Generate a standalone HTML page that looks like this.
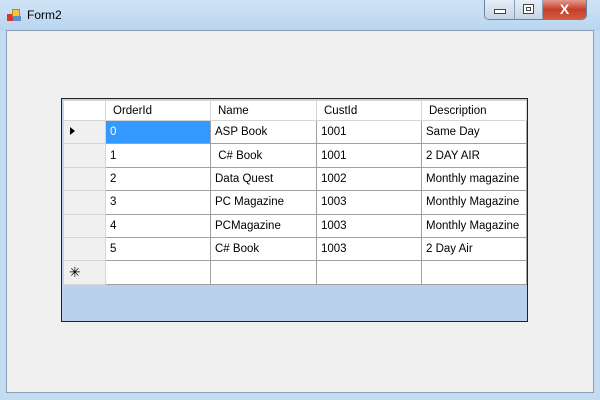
<!DOCTYPE html>
<html><head><style>
*{margin:0;padding:0;box-sizing:border-box}
body{width:600px;height:400px;overflow:hidden;background:#c4dcf2;font-family:"Liberation Sans",sans-serif;font-size:11.5px;color:#000;position:relative}
.title{position:absolute;left:0;top:0;width:600px;height:31px;background:linear-gradient(#cfe3f6,#b9d5ef)}
.client{position:absolute;left:6px;top:30px;width:588px;height:363px;background:#f0f0f0;border:1px solid #8a9fb5}
.btns{position:absolute;top:0;left:484px;height:20px;width:103px;border:1px solid #6e8298;border-top:none;border-radius:0 0 5px 5px;overflow:hidden;display:flex}
.grid{position:absolute;left:61px;top:98px;width:467px;height:224px;background:#b9d1ea;border:1px solid #222}
table{border-collapse:collapse;position:absolute;left:1px;top:1px}
td{height:23.4px;border:1px solid #a0a0a0;padding:0 0 0 4px;background:#fff;white-space:nowrap}
td.h{background:#f0f0f0;border-color:#d5d5d5;padding:0}
tr.hd td{height:20px;background:#fff;border-color:#d5d5d5;padding-left:7px}
</style></head><body>
<div class="title">
<div style="position:absolute;left:7px;top:9px;width:14px;height:12px">
<div style="position:absolute;left:0;top:5px;width:6px;height:7px;background:#d33"></div>
<div style="position:absolute;left:5px;top:0;width:8px;height:8px;background:#f5c542;border:1px solid #b88a10"></div>
<div style="position:absolute;left:6px;top:7px;width:8px;height:5px;background:#5b8fd0"></div></div>
<div style="position:absolute;left:27px;top:8px;font-size:12px">Form2</div>
<div class="btns">
<div style="width:30px;background:linear-gradient(#e6eef7,#c5d5e6);border-right:1px solid #8a9fb5;position:relative"><div style="position:absolute;left:9px;top:9px;width:12px;height:5px;border:1px solid #444;background:#fff"></div></div>
<div style="width:28px;background:linear-gradient(#e6eef7,#c5d5e6);border-right:1px solid #8a9fb5;position:relative"><div style="position:absolute;left:8px;top:4px;width:11px;height:10px;border:1px solid #444;background:#fff"><div style="margin:2px;width:5px;height:4px;border:1px solid #444"></div></div></div>
<div style="flex:1;background:linear-gradient(#e49a8c,#c7402c 50%,#d05a40);color:#fff;font-weight:bold;font-size:14px;text-align:center;line-height:18px">X</div>
</div></div>
<div class="client"></div>
<div class="grid">
<table>
<colgroup><col style="width:42px"><col style="width:105px"><col style="width:106px"><col style="width:105px"><col style="width:105px"></colgroup>
<tr class="hd"><td class="h" style="background:#fff"></td><td>OrderId</td><td>Name</td><td>CustId</td><td>Description</td></tr>
<tr><td class="h"><span style="display:inline-block;margin-left:6px;border-left:5px solid #000;border-top:4px solid transparent;border-bottom:4px solid transparent"></span></td><td style="background:#3399ff;color:#fff">0</td><td>ASP Book</td><td>1001</td><td>Same Day</td></tr>
<tr><td class="h"></td><td>1</td><td>&nbsp;C# Book</td><td>1001</td><td>2 DAY AIR</td></tr>
<tr><td class="h"></td><td>2</td><td>Data Quest</td><td>1002</td><td>Monthly magazine</td></tr>
<tr><td class="h"></td><td>3</td><td>PC Magazine</td><td>1003</td><td>Monthly Magazine</td></tr>
<tr><td class="h"></td><td>4</td><td>PCMagazine</td><td>1003</td><td>Monthly Magazine</td></tr>
<tr><td class="h"></td><td>5</td><td>C# Book</td><td>1003</td><td>2 Day Air</td></tr>
<tr><td class="h" style="padding-left:5px;font-size:14px">✳</td><td></td><td></td><td></td><td></td></tr>
</table></div>
</body></html>
